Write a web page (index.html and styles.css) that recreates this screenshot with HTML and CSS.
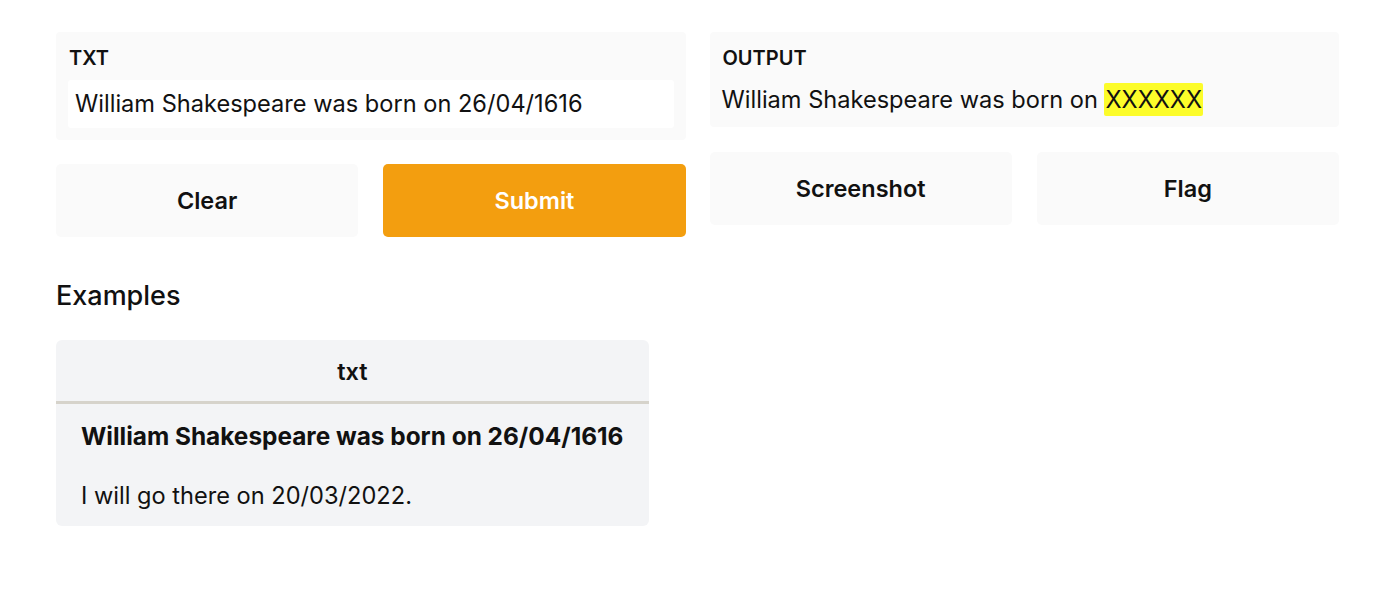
FILE: index.html
```html
<!DOCTYPE html>
<html>
<head>
<meta charset="utf-8">
<link rel="stylesheet" href="styles.css">
</head>
<body>
<div class="app">
  <div class="columns">
    <div class="col">
      <div class="panel panel-input">
        <div class="label">TXT</div>
        <div class="textbox">William Shakespeare was born on 26/04/1616</div>
      </div>
      <div class="btn-row">
        <button class="btn">Clear</button>
        <button class="btn btn-primary">Submit</button>
      </div>
    </div>
    <div class="col">
      <div class="panel panel-output">
        <div class="label">OUTPUT</div>
        <div class="output-text">William Shakespeare was born on <span class="hl">XXXXXX</span></div>
      </div>
      <div class="btn-row">
        <button class="btn">Screenshot</button>
        <button class="btn">Flag</button>
      </div>
    </div>
  </div>
  <h2 class="examples-title">Examples</h2>
  <div class="examples">
    <div class="ex-head">txt</div>
    <div class="ex-row ex-row-bold">William Shakespeare was born on 26/04/1616</div>
    <div class="ex-row ex-row-last">I will go there on 20/03/2022.</div>
  </div>
</div>
</body>
</html>
```

FILE: styles.css
```css
* { box-sizing: border-box; }
body {
  margin: 0;
  background: #ffffff;
  font-family: Inter, "Liberation Sans", Arial, sans-serif;
  color: #111111;
}
.app {
  padding: 32px 61px 0 56px;
}
.columns {
  display: flex;
  gap: 24px;
}
.col {
  flex: 1;
  display: flex;
  flex-direction: column;
  gap: 24px;
}
.panel {
  background: #fafafa;
  border-radius: 4px;
  padding: 15px 12px 12px 12px;
}
.label {
  font-size: 20px;
  font-weight: 600;
  line-height: 22px;
  margin-bottom: 11px;
  padding-left: 1px;
}
.panel-input { height: 108px; }
.panel-output { height: 95px; }
.textbox {
  background: #ffffff;
  height: 48px;
  line-height: 48px;
  padding: 0 7px;
  font-size: 23.6px;
  border-radius: 3px;
}
.output-text {
  font-size: 23.6px;
  line-height: 27px;
  margin-top: 17px;
  padding-left: 0;
}
.panel-output .label { margin-bottom: 0; }
.hl {
  background: #fcfc2a;
  border-radius: 2px;
  padding: 2px 1px;
}
.btn-row {
  display: flex;
  gap: 25px;
}
.panel-output + .btn-row { margin-top: 1px; }
.btn {
  flex: 1;
  height: 73px;
  border: none;
  background: #fafafa;
  border-radius: 5px;
  font-family: Inter, "Liberation Sans", Arial, sans-serif;
  font-size: 23.5px;
  font-weight: 600;
  color: #111111;
  padding: 0;
}
.btn-primary {
  background: #f39e0f;
  color: #ffffff;
}
.examples-title {
  margin: 44px 0 0 0;
  font-size: 27px;
  font-weight: 500;
  line-height: 30px;
}
.examples {
  margin-top: 29px;
  width: 593px;
  background: #f3f4f6;
  border-radius: 6px;
  overflow: hidden;
}
.ex-head {
  height: 64px;
  border-bottom: 3px solid #d6d3cb;
  text-align: center;
  font-size: 23.5px;
  font-weight: 600;
  line-height: 63px;
}
.ex-row {
  height: 62px;
  line-height: 64px;
  padding-left: 25px;
  font-size: 23.6px;
}
.ex-row-bold {
  font-weight: 700;
  font-size: 24.4px;
}
.ex-row-last {
  height: 60px;
  line-height: 60px;
}
```
